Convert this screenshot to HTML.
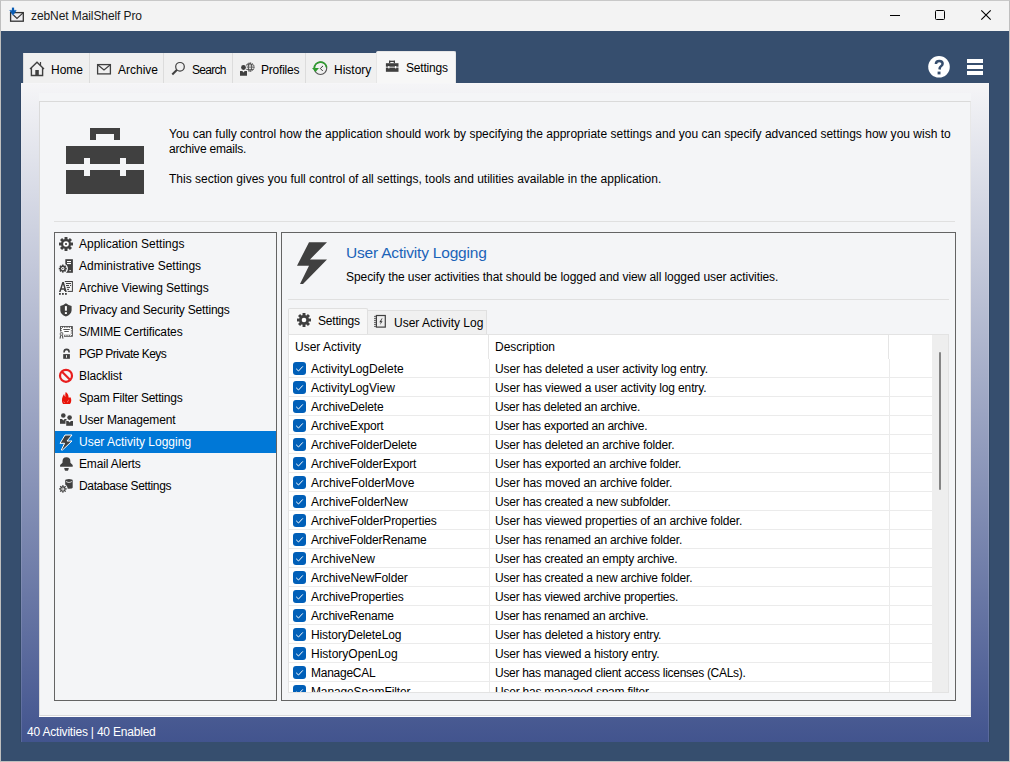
<!DOCTYPE html><html><head><meta charset="utf-8"><style>
*{margin:0;padding:0;box-sizing:border-box}
html,body{width:1010px;height:762px;overflow:hidden;background:#364E6E;font-family:"Liberation Sans",sans-serif;}
.a{position:absolute}
.t{position:absolute;white-space:nowrap;font-family:"Liberation Sans",sans-serif}
svg{position:absolute;overflow:visible}
</style></head><body>
<div class="a" style="left:0;top:0;width:1010px;height:762px;border:1px solid #BFBFBF;border-top-color:#C8C8C8"></div>
<div class="a" style="left:1px;top:1px;width:1008px;height:30px;background:#F3F3F3"></div>
<svg style="left:0px;top:0px" width="30" height="30"><rect x="10.6" y="12.6" width="12.7" height="8.6" fill="#EDEDF0" stroke="#333" stroke-width="1.3"/><path d="M13.4 15 L17 18.4 L23 12.8" fill="none" stroke="#333" stroke-width="1.1"/><circle cx="13" cy="11.5" r="4.2" fill="#F3F3F3" opacity="0"/><path d="M13 7.6 L13 12.5" stroke="#0A5DB5" stroke-width="2.2"/><path d="M9.8 10.4 L16.2 10.4 L13 15.3Z" fill="#0A5DB5" stroke="#0A5DB5" stroke-width="0.6" stroke-linejoin="round"/></svg>
<div class="t" style="left:31px;top:8.84px;font-size:12px;line-height:15px;color:#1A1A1A;letter-spacing:-0.089px;">zebNet MailShelf Pro</div>
<div class="a" style="left:890px;top:15px;width:10px;height:1px;background:#000"></div>
<div class="a" style="left:935px;top:10px;width:10px;height:10px;border:1px solid #000;border-radius:1.5px"></div>
<svg style="left:981px;top:10px" width="10" height="10"><path d="M0.3 0.3 L9.7 9.7 M9.7 0.3 L0.3 9.7" stroke="#000" stroke-width="1.15"/></svg>
<div class="a" style="left:23px;top:53px;width:66px;height:30px;background:#F0F0F0;border-left:1px solid #DCDCDC"></div>
<div class="t" style="left:51px;top:62.84px;font-size:12px;line-height:15px;color:#000;">Home</div>
<div class="a" style="left:89px;top:53px;width:74px;height:30px;background:#F0F0F0;border-left:1px solid #DCDCDC"></div>
<div class="t" style="left:118px;top:62.84px;font-size:12px;line-height:15px;color:#000;">Archive</div>
<div class="a" style="left:163px;top:53px;width:69px;height:30px;background:#F0F0F0;border-left:1px solid #DCDCDC"></div>
<div class="t" style="left:192px;top:62.84px;font-size:12px;line-height:15px;color:#000;letter-spacing:-0.740px;">Search</div>
<div class="a" style="left:232px;top:53px;width:73px;height:30px;background:#F0F0F0;border-left:1px solid #DCDCDC"></div>
<div class="t" style="left:261px;top:62.84px;font-size:12px;line-height:15px;color:#000;letter-spacing:-0.214px;">Profiles</div>
<div class="a" style="left:305px;top:53px;width:71px;height:30px;background:#F0F0F0;border-left:1px solid #DCDCDC"></div>
<div class="t" style="left:334px;top:62.84px;font-size:12px;line-height:15px;color:#000;">History</div>
<div class="a" style="left:376px;top:51px;width:80px;height:32px;background:#F7F7F7;border:1px solid #E6E6E6;border-bottom:none;border-radius:2px 2px 0 0"></div>
<div class="t" style="left:406px;top:60.84px;font-size:12px;line-height:15px;color:#000;letter-spacing:-0.200px;">Settings</div>
<svg style="left:29px;top:60px" width="16" height="18"><path d="M1 9 L8 2.3 L15 9" fill="none" stroke="#404040" stroke-width="1.4"/><path d="M2.4 8 L2.4 15.5 L13.6 15.5 L13.6 8" fill="none" stroke="#404040" stroke-width="1.4"/><rect x="6.3" y="10" width="3.5" height="5.5" fill="#404040"/><path d="M11.5 2 L11.5 6" stroke="#404040" stroke-width="1.2"/></svg>
<svg style="left:96px;top:62px" width="16" height="14"><rect x="1.6" y="2.6" width="12.8" height="9.3" fill="none" stroke="#404040" stroke-width="1.3"/><path d="M2 3 L8 8 L14 3" fill="none" stroke="#404040" stroke-width="1.2"/></svg>
<svg style="left:170px;top:60px" width="18" height="18"><circle cx="10" cy="6.8" r="4.3" fill="none" stroke="#404040" stroke-width="1.2"/><path d="M7 9.8 L2.3 14.5" stroke="#404040" stroke-width="2"/></svg>
<svg style="left:234px;top:56px" width="24" height="24"><circle cx="16" cy="11.1" r="4.1" fill="none" stroke="#404040" stroke-width="1" stroke-dasharray="1.6 0.7"/><ellipse cx="16" cy="11.1" rx="1.7" ry="4.1" fill="none" stroke="#404040" stroke-width="0.8"/><path d="M11.9 11.1 L20.1 11.1 M12.6 8.8 L19.4 8.8 M12.6 13.4 L19.4 13.4" stroke="#404040" stroke-width="0.8"/><circle cx="9.5" cy="11.5" r="3.3" fill="#F0F0F0"/><path d="M5.2 14.2 L14 14.2 L14 20.5 L5.2 20.5Z" fill="#F0F0F0"/><circle cx="9.5" cy="11.5" r="2.4" fill="#404040"/><path d="M6 15 L8.3 15 L9.5 16.6 L10.7 15 L13 15 L13 19.8 L6 19.8Z" fill="#404040"/></svg>
<svg style="left:306px;top:56px" width="24" height="24"><circle cx="14.5" cy="12.3" r="6.2" fill="none" stroke="#555" stroke-width="1.1"/><path d="M8.3 12.3 A6.2 6.2 0 0 1 20.6 11.3" fill="none" stroke="#2E9C2E" stroke-width="1.8"/><path d="M6 12.1 L13 12.1 L9.5 15.9Z" fill="#2E9C2E"/><path d="M17 9.9 L14.3 12.5 L16.8 15" fill="none" stroke="#222" stroke-width="0.9"/></svg>
<svg style="left:385px;top:59px" width="16" height="16"><rect x="4" y="1.7" width="6" height="1.3" fill="#404040"/><rect x="4" y="1.7" width="1.3" height="2.5" fill="#404040"/><rect x="8.7" y="1.7" width="1.3" height="2.5" fill="#404040"/><rect x="0.9" y="4.2" width="12.6" height="3.5" fill="#404040"/><rect x="0.9" y="8.6" width="12.6" height="4.2" fill="#404040"/><rect x="3.2" y="7" width="1.2" height="2.4" fill="#fff"/><rect x="10" y="7" width="1.2" height="2.4" fill="#fff"/></svg>
<svg style="left:927px;top:55px" width="24" height="24"><circle cx="12" cy="11.8" r="10.8" fill="#fff"/><path d="M8.9 9 C8.9 6.8 10.3 5.9 12.3 5.9 C14.4 5.9 15.6 7 15.6 8.7 C15.6 10.6 13.7 11.1 12.9 12.5 L12.5 14.6" fill="none" stroke="#364E6E" stroke-width="2.5"/><rect x="10.6" y="16.6" width="2.9" height="2.8" fill="#364E6E"/></svg>
<div class="a" style="left:967px;top:59px;width:16px;height:4px;background:#fff"></div>
<div class="a" style="left:967px;top:65px;width:16px;height:4px;background:#fff"></div>
<div class="a" style="left:967px;top:71px;width:16px;height:4px;background:#fff"></div>
<div class="a" style="left:21px;top:83px;width:968px;height:659px;background:linear-gradient(#F5F5F7,#42548E) border-box;border:1px solid rgba(255,255,255,0.12);border-bottom:none;box-shadow:-1px 0 0 rgba(0,0,0,0.08),1px 0 0 rgba(0,0,0,0.08)"></div>
<div class="a" style="left:39px;top:93px;width:932px;height:624px;background:#F4F5F7"></div>
<div class="a" style="left:39px;top:101px;width:932px;height:615px;background:#F4F5F7;border:1px solid #DADADA;border-right-color:#E8E8E8;box-shadow:0 1px 0 #fff"></div>
<svg style="left:66px;top:128px" width="78" height="66"><rect x="24" y="0" width="30" height="6" fill="#404040"/><rect x="24" y="0" width="6" height="12" fill="#404040"/><rect x="48" y="0" width="6" height="12" fill="#404040"/><rect x="0" y="18" width="78" height="18" fill="#404040"/><rect x="0" y="42" width="78" height="24" fill="#404040"/><rect x="18" y="30" width="6" height="18" fill="#F4F5F7"/><rect x="54" y="30" width="6" height="18" fill="#F4F5F7"/></svg>
<div class="t" style="left:169px;top:126.84px;font-size:12px;line-height:15px;color:#000;letter-spacing:0.012px;">You can fully control how the application should work by specifying the appropriate settings and you can specify advanced settings how you wish to</div>
<div class="t" style="left:169px;top:141.84px;font-size:12px;line-height:15px;color:#000;letter-spacing:-0.186px;">archive emails.</div>
<div class="t" style="left:169px;top:171.84px;font-size:12px;line-height:15px;color:#000;">This section gives you full control of all settings, tools and utilities available in the application.</div>
<div class="a" style="left:54px;top:221px;width:901px;height:1px;background:#E0E0E0"></div>
<div class="a" style="left:54px;top:232px;width:223px;height:469px;border:1px solid #646464;background:#F4F5F7"></div>
<svg style="left:57px;top:235px" width="18" height="18"><rect x="7.53" y="2.00" width="2.94" height="7.00" fill="#404040" transform="rotate(0.0 9 9)"/><rect x="7.53" y="2.00" width="2.94" height="7.00" fill="#404040" transform="rotate(45.0 9 9)"/><rect x="7.53" y="2.00" width="2.94" height="7.00" fill="#404040" transform="rotate(90.0 9 9)"/><rect x="7.53" y="2.00" width="2.94" height="7.00" fill="#404040" transform="rotate(135.0 9 9)"/><rect x="7.53" y="2.00" width="2.94" height="7.00" fill="#404040" transform="rotate(180.0 9 9)"/><rect x="7.53" y="2.00" width="2.94" height="7.00" fill="#404040" transform="rotate(225.0 9 9)"/><rect x="7.53" y="2.00" width="2.94" height="7.00" fill="#404040" transform="rotate(270.0 9 9)"/><rect x="7.53" y="2.00" width="2.94" height="7.00" fill="#404040" transform="rotate(315.0 9 9)"/><circle cx="9" cy="9" r="5" fill="#404040"/><circle cx="9" cy="9" r="2.8" fill="#fff"/><circle cx="9" cy="9" r="1.1" fill="#404040"/></svg>
<div class="t" style="left:79px;top:236.84px;font-size:12px;line-height:15px;color:#000;">Application Settings</div>
<svg style="left:57px;top:257px" width="18" height="18"><rect x="8.3" y="2.2" width="7.6" height="13.6" fill="#404040"/><rect x="10" y="4" width="4" height="1.1" fill="#fff"/><rect x="10" y="6" width="4" height="1.1" fill="#fff"/><rect x="12.5" y="13" width="1.2" height="1.2" fill="#fff"/><circle cx="5.8" cy="11.6" r="5.2" fill="#F4F5F7"/><rect x="4.96" y="7.60" width="1.68" height="4.00" fill="#404040" transform="rotate(0.0 5.8 11.6)"/><rect x="4.96" y="7.60" width="1.68" height="4.00" fill="#404040" transform="rotate(45.0 5.8 11.6)"/><rect x="4.96" y="7.60" width="1.68" height="4.00" fill="#404040" transform="rotate(90.0 5.8 11.6)"/><rect x="4.96" y="7.60" width="1.68" height="4.00" fill="#404040" transform="rotate(135.0 5.8 11.6)"/><rect x="4.96" y="7.60" width="1.68" height="4.00" fill="#404040" transform="rotate(180.0 5.8 11.6)"/><rect x="4.96" y="7.60" width="1.68" height="4.00" fill="#404040" transform="rotate(225.0 5.8 11.6)"/><rect x="4.96" y="7.60" width="1.68" height="4.00" fill="#404040" transform="rotate(270.0 5.8 11.6)"/><rect x="4.96" y="7.60" width="1.68" height="4.00" fill="#404040" transform="rotate(315.0 5.8 11.6)"/><circle cx="5.8" cy="11.6" r="3" fill="#404040"/><circle cx="5.8" cy="11.6" r="1.6" fill="#fff"/><circle cx="5.8" cy="11.6" r="0.7" fill="#404040"/></svg>
<div class="t" style="left:79px;top:258.84px;font-size:12px;line-height:15px;color:#000;">Administrative Settings</div>
<svg style="left:57px;top:279px" width="18" height="18"><rect x="7.6" y="2.5" width="7.8" height="9.9" fill="none" stroke="#404040" stroke-width="1"/><rect x="9" y="4" width="5" height="1" fill="#404040"/><rect x="9" y="6" width="3" height="1" fill="#404040"/><rect x="13" y="6" width="1.1" height="1" fill="#404040"/><rect x="9.5" y="7.9" width="3.5" height="1" fill="#404040"/><rect x="10" y="9.9" width="2" height="1" fill="#404040"/><path d="M2 12.9 L5.3 3 L6.9 3 L9.8 12.9Z" fill="none" stroke="#F4F5F7" stroke-width="2"/><path d="M2 12.9 L5.3 3 L6.9 3 L9.8 12.9 L8.2 12.9 L7.6 10.8 L4.3 10.8 L3.6 12.9Z M4.8 9.3 L7.2 9.3 L6 5.4Z" fill="#404040" fill-rule="evenodd"/><rect x="2" y="14" width="1.8" height="1.8" fill="#404040"/><rect x="5" y="14" width="1.8" height="1.8" fill="#404040"/><rect x="8" y="14" width="1.8" height="1.8" fill="#404040"/></svg>
<div class="t" style="left:79px;top:280.84px;font-size:12px;line-height:15px;color:#000;letter-spacing:-0.096px;">Archive Viewing Settings</div>
<svg style="left:57px;top:301px" width="18" height="18"><path d="M8.9 2.2 Q11.5 4.2 14.6 5 L14.6 9.5 Q14.2 13.5 8.9 15.6 Q3.6 13.5 3.3 9.5 L3.3 5 Q6.3 4.2 8.9 2.2Z" fill="#404040"/><rect x="7.9" y="5.1" width="2" height="4.6" fill="#fff"/><rect x="7.9" y="11.1" width="2" height="1.9" fill="#fff"/></svg>
<div class="t" style="left:79px;top:302.84px;font-size:12px;line-height:15px;color:#000;letter-spacing:-0.186px;">Privacy and Security Settings</div>
<svg style="left:57px;top:323px" width="18" height="18"><rect x="3.1" y="3.1" width="12.7" height="10.6" fill="#404040"/><rect x="5" y="5" width="8.9" height="6.8" fill="#fff"/><circle cx="4.6" cy="4.5" r="0.65" fill="#fff"/><circle cx="4.6" cy="12.3" r="0.65" fill="#fff"/><circle cx="6.4" cy="4.5" r="0.65" fill="#fff"/><circle cx="6.4" cy="12.3" r="0.65" fill="#fff"/><circle cx="8.2" cy="4.5" r="0.65" fill="#fff"/><circle cx="8.2" cy="12.3" r="0.65" fill="#fff"/><circle cx="10" cy="4.5" r="0.65" fill="#fff"/><circle cx="10" cy="12.3" r="0.65" fill="#fff"/><circle cx="11.8" cy="4.5" r="0.65" fill="#fff"/><circle cx="11.8" cy="12.3" r="0.65" fill="#fff"/><circle cx="13.6" cy="4.5" r="0.65" fill="#fff"/><circle cx="13.6" cy="12.3" r="0.65" fill="#fff"/><circle cx="4.5" cy="6.3" r="0.65" fill="#fff"/><circle cx="14.4" cy="6.3" r="0.65" fill="#fff"/><circle cx="4.5" cy="8.1" r="0.65" fill="#fff"/><circle cx="14.4" cy="8.1" r="0.65" fill="#fff"/><circle cx="4.5" cy="9.9" r="0.65" fill="#fff"/><circle cx="14.4" cy="9.9" r="0.65" fill="#fff"/><circle cx="4.5" cy="11.5" r="0.65" fill="#fff"/><circle cx="14.4" cy="11.5" r="0.65" fill="#fff"/><rect x="6.3" y="6" width="6.5" height="0.9" fill="#404040"/><rect x="7.3" y="8" width="4.5" height="0.9" fill="#404040"/><circle cx="4.5" cy="11" r="2.8" fill="#F4F5F7"/><path d="M2.3 12 L2.3 16.3 L7 16.3 L7 12Z" fill="#F4F5F7"/><circle cx="4.5" cy="11" r="1.9" fill="#777"/><circle cx="4.5" cy="11" r="0.8" fill="#fff"/><path d="M3.5 12.6 L3.1 15.6 M5.5 12.6 L5.9 15.6" stroke="#404040" stroke-width="1"/></svg>
<div class="t" style="left:79px;top:324.84px;font-size:12px;line-height:15px;color:#000;letter-spacing:-0.133px;">S/MIME Certificates</div>
<svg style="left:57px;top:345px" width="18" height="18"><path d="M7.1 7.6 L7.1 7 A2.2 2.3 0 0 1 12.1 7 L12.1 7.6" fill="none" stroke="#404040" stroke-width="1.6"/><rect x="6.2" y="9.1" width="6.7" height="4.7" fill="#404040"/><rect x="9" y="10.2" width="0.9" height="2.5" fill="#fff"/></svg>
<div class="t" style="left:79px;top:346.84px;font-size:12px;line-height:15px;color:#000;letter-spacing:-0.533px;">PGP Private Keys</div>
<svg style="left:57px;top:367px" width="18" height="18"><circle cx="9" cy="8.8" r="6" fill="none" stroke="#E81E1E" stroke-width="2.2"/><path d="M5 4.8 L13 12.8" stroke="#E81E1E" stroke-width="2.2"/></svg>
<div class="t" style="left:79px;top:368.84px;font-size:12px;line-height:15px;color:#000;letter-spacing:-0.125px;">Blacklist</div>
<svg style="left:57px;top:389px" width="18" height="18"><path d="M5 12 C4.7 9 6.1 6.6 7.1 5 C7.3 6.4 7.7 7.4 8.4 8 C8.1 6 8.2 4.3 8.7 2.9 C10.6 4.2 11.9 6.2 11.5 8.6 C12.2 8.3 12.9 8.7 13.5 8.2 C14.6 10.2 14.6 13.3 13 15 L6.2 15 C5.6 14.4 5.1 13.5 5 12Z" fill="#E8140A"/><path d="M6.4 12 C6.8 12.8 7.3 13.3 7.8 13.7 L7.2 13.9 C6.8 13.4 6.5 12.8 6.4 12Z" fill="#fff" opacity="0.8"/><path d="M11.6 10.3 C11.2 11.2 10.6 12.2 10.2 13.2 L10.8 13.3 C11.3 12.4 11.7 11.4 11.6 10.3Z" fill="#fff" opacity="0.8"/></svg>
<div class="t" style="left:79px;top:390.84px;font-size:12px;line-height:15px;color:#000;letter-spacing:-0.232px;">Spam Filter Settings</div>
<svg style="left:57px;top:411px" width="18" height="18"><circle cx="6.3" cy="4.5" r="2.3" fill="#404040"/><path d="M3 8 L9.5 8 L9.5 12.8 L3 12.8Z" fill="#404040"/><circle cx="12.6" cy="6.6" r="2.7" fill="#F4F5F7"/><path d="M8.5 9.5 L16.5 9.5 L16.5 15.5 L8.5 15.5Z" fill="#F4F5F7"/><circle cx="12.6" cy="6.6" r="2.3" fill="#404040"/><path d="M9.2 10 L16 10 L16 14.8 L9.2 14.8Z" fill="#404040"/><path d="M5 8 L6.3 9.5 L7.6 8Z" fill="#F4F5F7"/><path d="M11.3 10 L12.6 11.5 L13.9 10Z" fill="#F4F5F7"/></svg>
<div class="t" style="left:79px;top:412.84px;font-size:12px;line-height:15px;color:#000;letter-spacing:-0.157px;">User Management</div>
<div class="a" style="left:55px;top:431px;width:221px;height:22px;background:#0078D7"></div>
<svg style="left:57px;top:433px" width="18" height="18"><path d="M8 2 L15 2 L10 8 L15 8 L5.5 17 L4.3 17 L7.6 10.3 L3 10.3Z" fill="#404040" stroke="#fff" stroke-width="1" stroke-linejoin="miter"/></svg>
<div class="t" style="left:79px;top:434.84px;font-size:12px;line-height:15px;color:#fff;">User Activity Logging</div>
<svg style="left:57px;top:455px" width="18" height="18"><path d="M9.4 2.2 C12.2 2.2 13.2 3.6 13.3 5.5 L13.4 7.8 L15.7 10 L15.7 11.8 L3.1 11.8 L3.1 10 L5.5 7.8 L5.6 5.5 C5.7 3.6 6.7 2.2 9.4 2.2Z" fill="#404040"/><path d="M7.2 13.1 L11.8 13.1 L11.3 14.9 Q11 15.8 10 15.8 L9 15.8 Q8 15.8 7.7 14.9Z" fill="#404040"/></svg>
<div class="t" style="left:79px;top:456.84px;font-size:12px;line-height:15px;color:#000;letter-spacing:-0.145px;">Email Alerts</div>
<svg style="left:57px;top:477px" width="18" height="18"><path d="M8.2 3.6 A3.75 1.5 0 0 1 15.7 3.6 L15.7 10.5 A3.75 1.2 0 0 1 8.2 10.5Z" fill="#404040"/><path d="M9 4.2 Q12 5.6 14.9 4.2 L14.9 5 Q12 6.4 9 5Z" fill="#fff"/><circle cx="5.9" cy="11.9" r="4.8" fill="#F4F5F7"/><rect x="5.35" y="8.00" width="1.10" height="3.90" fill="#404040" transform="rotate(0.0 5.9 11.9)"/><rect x="5.35" y="8.00" width="1.10" height="3.90" fill="#404040" transform="rotate(45.0 5.9 11.9)"/><rect x="5.35" y="8.00" width="1.10" height="3.90" fill="#404040" transform="rotate(90.0 5.9 11.9)"/><rect x="5.35" y="8.00" width="1.10" height="3.90" fill="#404040" transform="rotate(135.0 5.9 11.9)"/><rect x="5.35" y="8.00" width="1.10" height="3.90" fill="#404040" transform="rotate(180.0 5.9 11.9)"/><rect x="5.35" y="8.00" width="1.10" height="3.90" fill="#404040" transform="rotate(225.0 5.9 11.9)"/><rect x="5.35" y="8.00" width="1.10" height="3.90" fill="#404040" transform="rotate(270.0 5.9 11.9)"/><rect x="5.35" y="8.00" width="1.10" height="3.90" fill="#404040" transform="rotate(315.0 5.9 11.9)"/><circle cx="5.9" cy="11.9" r="2.6" fill="#404040"/><circle cx="5.9" cy="11.9" r="1.5" fill="#fff"/><circle cx="5.9" cy="11.9" r="0.65" fill="#404040"/></svg>
<div class="t" style="left:79px;top:478.84px;font-size:12px;line-height:15px;color:#000;letter-spacing:-0.350px;">Database Settings</div>
<div class="a" style="left:281px;top:232px;width:675px;height:469px;border:1px solid #646464;background:#F4F5F7"></div>
<svg style="left:296px;top:241px" width="32" height="44"><path d="M13 1.2 L31 1.2 L14 18.4 L31 18.4 L7 43 L4 43 L13 24.8 L1 24.8Z" fill="#404040"/></svg>
<div class="t" style="left:346px;top:243.13px;font-size:15.5px;line-height:19px;color:#1B63B8;letter-spacing:-0.195px;">User Activity Logging</div>
<div class="t" style="left:346px;top:269.84px;font-size:12px;line-height:15px;color:#000;letter-spacing:-0.069px;">Specify the user activities that should be logged and view all logged user activities.</div>
<div class="a" style="left:288px;top:299px;width:661px;height:1px;background:#E0E0E0"></div>
<div class="a" style="left:367px;top:310px;width:120px;height:25px;background:#F0F0F0;border:1px solid #E0E0E0;border-bottom:none"></div>
<div class="a" style="left:288px;top:308px;width:80px;height:28px;background:#F7F7F7;border:1px solid #E0E0E0;border-bottom:none;border-radius:2px 2px 0 0"></div>
<svg style="left:296px;top:312px" width="16" height="16"><rect x="6.53" y="1.00" width="2.94" height="7.00" fill="#404040" transform="rotate(0.0 8 8)"/><rect x="6.53" y="1.00" width="2.94" height="7.00" fill="#404040" transform="rotate(45.0 8 8)"/><rect x="6.53" y="1.00" width="2.94" height="7.00" fill="#404040" transform="rotate(90.0 8 8)"/><rect x="6.53" y="1.00" width="2.94" height="7.00" fill="#404040" transform="rotate(135.0 8 8)"/><rect x="6.53" y="1.00" width="2.94" height="7.00" fill="#404040" transform="rotate(180.0 8 8)"/><rect x="6.53" y="1.00" width="2.94" height="7.00" fill="#404040" transform="rotate(225.0 8 8)"/><rect x="6.53" y="1.00" width="2.94" height="7.00" fill="#404040" transform="rotate(270.0 8 8)"/><rect x="6.53" y="1.00" width="2.94" height="7.00" fill="#404040" transform="rotate(315.0 8 8)"/><circle cx="8" cy="8" r="5" fill="#404040"/><circle cx="8" cy="8" r="2.3" fill="#fff"/></svg>
<div class="t" style="left:318px;top:313.84px;font-size:12px;line-height:15px;color:#000;letter-spacing:-0.200px;">Settings</div>
<svg style="left:373px;top:314px" width="14" height="15"><rect x="3.4" y="1.5" width="8.9" height="11.6" fill="#EDEDED" stroke="#404040" stroke-width="1.2"/><path d="M1.2 2.4 L2.8 2.4 M1.2 4.4 L2.8 4.4 M1.2 6.4 L2.8 6.4 M1.2 8.4 L2.8 8.4 M1.2 10.4 L2.8 10.4 M1.2 12.4 L2.8 12.4" stroke="#404040" stroke-width="1"/><path d="M8.9 4.2 L6.3 8.3 L7.9 8.3 L6.9 10.9 L9.6 7.2 L8.1 7.2 L9.5 4.2Z" fill="#333"/></svg>
<div class="t" style="left:394px;top:315.84px;font-size:12px;line-height:15px;color:#000;">User Activity Log</div>
<div class="a" style="left:288px;top:334px;width:661px;height:359px;border:1px solid #E3E3E3;background:#fff;overflow:hidden">
</div>
<div class="t" style="left:295px;top:339.84px;font-size:12px;line-height:15px;color:#000;">User Activity</div>
<div class="t" style="left:495px;top:339.84px;font-size:12px;line-height:15px;color:#000;">Description</div>
<div class="a" style="left:488px;top:335px;width:1px;height:24px;background:#E5E5E5"></div>
<div class="a" style="left:888px;top:335px;width:1px;height:24px;background:#E5E5E5"></div>
<div class="a" style="left:932px;top:335px;width:16px;height:357px;background:#EEEEEE"></div>
<div class="a" style="left:939px;top:352px;width:2px;height:138px;background:#858585;border-radius:1px"></div>
<div class="a" style="left:289px;top:359px;width:643px;height:333px;overflow:hidden">
<div class="a" style="left:0;top:18px;width:643px;height:1px;background:#EBEBEB"></div>
<div class="a" style="left:4px;top:3px;width:13px;height:13px;background:#005FB8;border-radius:3px"></div>
<svg style="left:4px;top:3px" width="13" height="13"><path d="M3.2 6.8 L5.5 9 L9.8 4.4" fill="none" stroke="#fff" stroke-width="1"/></svg>
<div class="t" style="left:22px;top:2.84px;font-size:12px;line-height:15px;color:#000;">ActivityLogDelete</div>
<div class="t" style="left:206px;top:2.84px;font-size:12px;line-height:15px;color:#000;letter-spacing:-0.145px;">User has deleted a user activity log entry.</div>
<div class="a" style="left:0;top:37px;width:643px;height:1px;background:#EBEBEB"></div>
<div class="a" style="left:4px;top:22px;width:13px;height:13px;background:#005FB8;border-radius:3px"></div>
<svg style="left:4px;top:22px" width="13" height="13"><path d="M3.2 6.8 L5.5 9 L9.8 4.4" fill="none" stroke="#fff" stroke-width="1"/></svg>
<div class="t" style="left:22px;top:21.84px;font-size:12px;line-height:15px;color:#000;">ActivityLogView</div>
<div class="t" style="left:206px;top:21.84px;font-size:12px;line-height:15px;color:#000;letter-spacing:-0.139px;">User has viewed a user activity log entry.</div>
<div class="a" style="left:0;top:56px;width:643px;height:1px;background:#EBEBEB"></div>
<div class="a" style="left:4px;top:41px;width:13px;height:13px;background:#005FB8;border-radius:3px"></div>
<svg style="left:4px;top:41px" width="13" height="13"><path d="M3.2 6.8 L5.5 9 L9.8 4.4" fill="none" stroke="#fff" stroke-width="1"/></svg>
<div class="t" style="left:22px;top:40.84px;font-size:12px;line-height:15px;color:#000;letter-spacing:-0.167px;">ArchiveDelete</div>
<div class="t" style="left:206px;top:40.84px;font-size:12px;line-height:15px;color:#000;letter-spacing:-0.278px;">User has deleted an archive.</div>
<div class="a" style="left:0;top:75px;width:643px;height:1px;background:#EBEBEB"></div>
<div class="a" style="left:4px;top:60px;width:13px;height:13px;background:#005FB8;border-radius:3px"></div>
<svg style="left:4px;top:60px" width="13" height="13"><path d="M3.2 6.8 L5.5 9 L9.8 4.4" fill="none" stroke="#fff" stroke-width="1"/></svg>
<div class="t" style="left:22px;top:59.84px;font-size:12px;line-height:15px;color:#000;letter-spacing:-0.167px;">ArchiveExport</div>
<div class="t" style="left:206px;top:59.84px;font-size:12px;line-height:15px;color:#000;letter-spacing:-0.271px;">User has exported an archive.</div>
<div class="a" style="left:0;top:94px;width:643px;height:1px;background:#EBEBEB"></div>
<div class="a" style="left:4px;top:79px;width:13px;height:13px;background:#005FB8;border-radius:3px"></div>
<svg style="left:4px;top:79px" width="13" height="13"><path d="M3.2 6.8 L5.5 9 L9.8 4.4" fill="none" stroke="#fff" stroke-width="1"/></svg>
<div class="t" style="left:22px;top:78.84px;font-size:12px;line-height:15px;color:#000;letter-spacing:-0.156px;">ArchiveFolderDelete</div>
<div class="t" style="left:206px;top:78.84px;font-size:12px;line-height:15px;color:#000;letter-spacing:-0.174px;">User has deleted an archive folder.</div>
<div class="a" style="left:0;top:113px;width:643px;height:1px;background:#EBEBEB"></div>
<div class="a" style="left:4px;top:98px;width:13px;height:13px;background:#005FB8;border-radius:3px"></div>
<svg style="left:4px;top:98px" width="13" height="13"><path d="M3.2 6.8 L5.5 9 L9.8 4.4" fill="none" stroke="#fff" stroke-width="1"/></svg>
<div class="t" style="left:22px;top:97.84px;font-size:12px;line-height:15px;color:#000;letter-spacing:-0.183px;">ArchiveFolderExport</div>
<div class="t" style="left:206px;top:97.84px;font-size:12px;line-height:15px;color:#000;letter-spacing:-0.183px;">User has exported an archive folder.</div>
<div class="a" style="left:0;top:132px;width:643px;height:1px;background:#EBEBEB"></div>
<div class="a" style="left:4px;top:117px;width:13px;height:13px;background:#005FB8;border-radius:3px"></div>
<svg style="left:4px;top:117px" width="13" height="13"><path d="M3.2 6.8 L5.5 9 L9.8 4.4" fill="none" stroke="#fff" stroke-width="1"/></svg>
<div class="t" style="left:22px;top:116.84px;font-size:12px;line-height:15px;color:#000;">ArchiveFolderMove</div>
<div class="t" style="left:206px;top:116.84px;font-size:12px;line-height:15px;color:#000;letter-spacing:-0.147px;">User has moved an archive folder.</div>
<div class="a" style="left:0;top:151px;width:643px;height:1px;background:#EBEBEB"></div>
<div class="a" style="left:4px;top:136px;width:13px;height:13px;background:#005FB8;border-radius:3px"></div>
<svg style="left:4px;top:136px" width="13" height="13"><path d="M3.2 6.8 L5.5 9 L9.8 4.4" fill="none" stroke="#fff" stroke-width="1"/></svg>
<div class="t" style="left:22px;top:135.84px;font-size:12px;line-height:15px;color:#000;letter-spacing:-0.073px;">ArchiveFolderNew</div>
<div class="t" style="left:206px;top:135.84px;font-size:12px;line-height:15px;color:#000;letter-spacing:-0.197px;">User has created a new subfolder.</div>
<div class="a" style="left:0;top:170px;width:643px;height:1px;background:#EBEBEB"></div>
<div class="a" style="left:4px;top:155px;width:13px;height:13px;background:#005FB8;border-radius:3px"></div>
<svg style="left:4px;top:155px" width="13" height="13"><path d="M3.2 6.8 L5.5 9 L9.8 4.4" fill="none" stroke="#fff" stroke-width="1"/></svg>
<div class="t" style="left:22px;top:154.84px;font-size:12px;line-height:15px;color:#000;letter-spacing:-0.136px;">ArchiveFolderProperties</div>
<div class="t" style="left:206px;top:154.84px;font-size:12px;line-height:15px;color:#000;letter-spacing:-0.130px;">User has viewed properties of an archive folder.</div>
<div class="a" style="left:0;top:189px;width:643px;height:1px;background:#EBEBEB"></div>
<div class="a" style="left:4px;top:174px;width:13px;height:13px;background:#005FB8;border-radius:3px"></div>
<svg style="left:4px;top:174px" width="13" height="13"><path d="M3.2 6.8 L5.5 9 L9.8 4.4" fill="none" stroke="#fff" stroke-width="1"/></svg>
<div class="t" style="left:22px;top:173.84px;font-size:12px;line-height:15px;color:#000;letter-spacing:-0.206px;">ArchiveFolderRename</div>
<div class="t" style="left:206px;top:173.84px;font-size:12px;line-height:15px;color:#000;letter-spacing:-0.182px;">User has renamed an archive folder.</div>
<div class="a" style="left:0;top:208px;width:643px;height:1px;background:#EBEBEB"></div>
<div class="a" style="left:4px;top:193px;width:13px;height:13px;background:#005FB8;border-radius:3px"></div>
<svg style="left:4px;top:193px" width="13" height="13"><path d="M3.2 6.8 L5.5 9 L9.8 4.4" fill="none" stroke="#fff" stroke-width="1"/></svg>
<div class="t" style="left:22px;top:192.84px;font-size:12px;line-height:15px;color:#000;">ArchiveNew</div>
<div class="t" style="left:206px;top:192.84px;font-size:12px;line-height:15px;color:#000;letter-spacing:-0.206px;">User has created an empty archive.</div>
<div class="a" style="left:0;top:227px;width:643px;height:1px;background:#EBEBEB"></div>
<div class="a" style="left:4px;top:212px;width:13px;height:13px;background:#005FB8;border-radius:3px"></div>
<svg style="left:4px;top:212px" width="13" height="13"><path d="M3.2 6.8 L5.5 9 L9.8 4.4" fill="none" stroke="#fff" stroke-width="1"/></svg>
<div class="t" style="left:22px;top:211.84px;font-size:12px;line-height:15px;color:#000;letter-spacing:-0.080px;">ArchiveNewFolder</div>
<div class="t" style="left:206px;top:211.84px;font-size:12px;line-height:15px;color:#000;letter-spacing:-0.197px;">User has created a new archive folder.</div>
<div class="a" style="left:0;top:246px;width:643px;height:1px;background:#EBEBEB"></div>
<div class="a" style="left:4px;top:231px;width:13px;height:13px;background:#005FB8;border-radius:3px"></div>
<svg style="left:4px;top:231px" width="13" height="13"><path d="M3.2 6.8 L5.5 9 L9.8 4.4" fill="none" stroke="#fff" stroke-width="1"/></svg>
<div class="t" style="left:22px;top:230.84px;font-size:12px;line-height:15px;color:#000;letter-spacing:-0.125px;">ArchiveProperties</div>
<div class="t" style="left:206px;top:230.84px;font-size:12px;line-height:15px;color:#000;letter-spacing:-0.215px;">User has viewed archive properties.</div>
<div class="a" style="left:0;top:265px;width:643px;height:1px;background:#EBEBEB"></div>
<div class="a" style="left:4px;top:250px;width:13px;height:13px;background:#005FB8;border-radius:3px"></div>
<svg style="left:4px;top:250px" width="13" height="13"><path d="M3.2 6.8 L5.5 9 L9.8 4.4" fill="none" stroke="#fff" stroke-width="1"/></svg>
<div class="t" style="left:22px;top:249.84px;font-size:12px;line-height:15px;color:#000;letter-spacing:-0.200px;">ArchiveRename</div>
<div class="t" style="left:206px;top:249.84px;font-size:12px;line-height:15px;color:#000;letter-spacing:-0.263px;">User has renamed an archive.</div>
<div class="a" style="left:0;top:284px;width:643px;height:1px;background:#EBEBEB"></div>
<div class="a" style="left:4px;top:269px;width:13px;height:13px;background:#005FB8;border-radius:3px"></div>
<svg style="left:4px;top:269px" width="13" height="13"><path d="M3.2 6.8 L5.5 9 L9.8 4.4" fill="none" stroke="#fff" stroke-width="1"/></svg>
<div class="t" style="left:22px;top:268.84px;font-size:12px;line-height:15px;color:#000;letter-spacing:-0.107px;">HistoryDeleteLog</div>
<div class="t" style="left:206px;top:268.84px;font-size:12px;line-height:15px;color:#000;letter-spacing:-0.169px;">User has deleted a history entry.</div>
<div class="a" style="left:0;top:303px;width:643px;height:1px;background:#EBEBEB"></div>
<div class="a" style="left:4px;top:288px;width:13px;height:13px;background:#005FB8;border-radius:3px"></div>
<svg style="left:4px;top:288px" width="13" height="13"><path d="M3.2 6.8 L5.5 9 L9.8 4.4" fill="none" stroke="#fff" stroke-width="1"/></svg>
<div class="t" style="left:22px;top:287.84px;font-size:12px;line-height:15px;color:#000;">HistoryOpenLog</div>
<div class="t" style="left:206px;top:287.84px;font-size:12px;line-height:15px;color:#000;letter-spacing:-0.168px;">User has viewed a history entry.</div>
<div class="a" style="left:0;top:322px;width:643px;height:1px;background:#EBEBEB"></div>
<div class="a" style="left:4px;top:307px;width:13px;height:13px;background:#005FB8;border-radius:3px"></div>
<svg style="left:4px;top:307px" width="13" height="13"><path d="M3.2 6.8 L5.5 9 L9.8 4.4" fill="none" stroke="#fff" stroke-width="1"/></svg>
<div class="t" style="left:22px;top:306.84px;font-size:12px;line-height:15px;color:#000;letter-spacing:-0.262px;">ManageCAL</div>
<div class="t" style="left:206px;top:306.84px;font-size:12px;line-height:15px;color:#000;letter-spacing:-0.289px;">User has managed client access licenses (CALs).</div>
<div class="a" style="left:0;top:341px;width:643px;height:1px;background:#EBEBEB"></div>
<div class="a" style="left:4px;top:326px;width:13px;height:13px;background:#005FB8;border-radius:3px"></div>
<svg style="left:4px;top:326px" width="13" height="13"><path d="M3.2 6.8 L5.5 9 L9.8 4.4" fill="none" stroke="#fff" stroke-width="1"/></svg>
<div class="t" style="left:22px;top:325.84px;font-size:12px;line-height:15px;color:#000;letter-spacing:-0.127px;">ManageSpamFilter</div>
<div class="t" style="left:206px;top:325.84px;font-size:12px;line-height:15px;color:#000;letter-spacing:-0.225px;">User has managed spam filter.</div>
<div class="a" style="left:200px;top:0;width:1px;height:333px;background:#EBEBEB"></div>
<div class="a" style="left:600px;top:0;width:1px;height:333px;background:#EBEBEB"></div>
</div>
<div class="t" style="left:27px;top:724.84px;font-size:12px;line-height:15px;color:#fff;letter-spacing:-0.204px;">40 Activities | 40 Enabled</div>
</body></html>
